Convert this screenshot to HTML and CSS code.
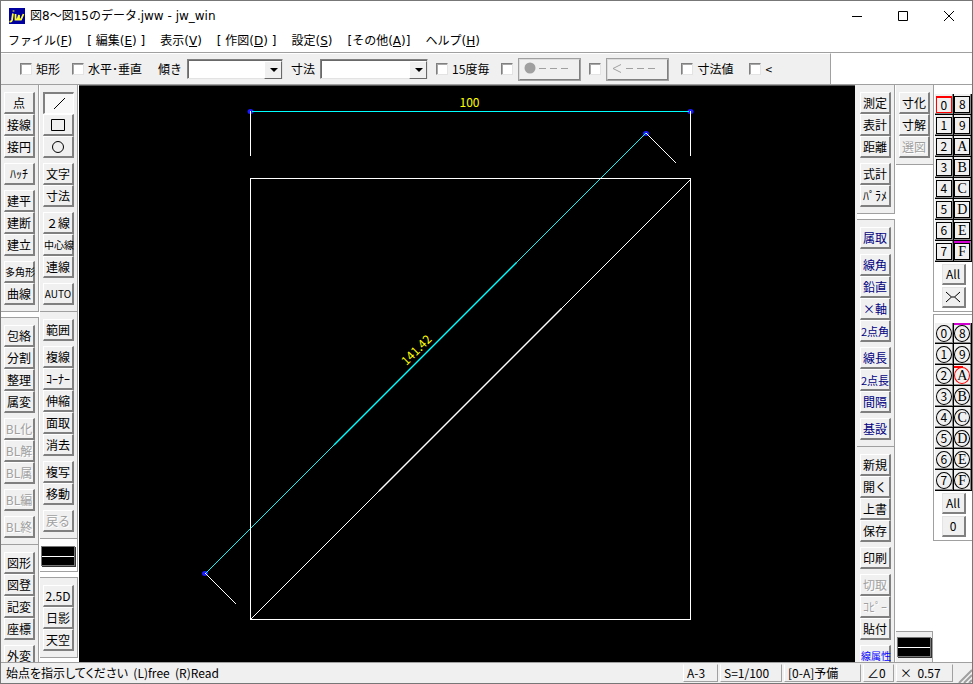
FILE: index.html
```html
<!DOCTYPE html>
<html lang="ja">
<head>
<meta charset="utf-8">
<title>図8～図15のデータ.jww - jw_win</title>
<link rel="stylesheet" href="styles.css">
</head>
<body>
<div class="window">
  <header class="titlebar">
    <svg class="logo" viewBox="0 0 16 16" aria-hidden="true">
      <rect width="16" height="16" fill="#0000a0"/>
      <path d="M4.500 2.500v1M4 5.500L3 12q-.5 2-2.500 1.500M6.500 6v5.500h2L10 7v4.500h2L14.500 6" fill="none" stroke="#ffff30" stroke-width="1.800"/>
    </svg>
    <h1 class="title">図8～図15のデータ.jww - jw_win</h1>
    <div class="caption-buttons">
      <button class="caption" aria-label="最小化"><svg viewBox="0 0 12 12"><path d="M1 6.500h10" /></svg></button>
      <button class="caption" aria-label="最大化"><svg viewBox="0 0 12 12"><path d="M1.500 1.500h9v9h-9z" /></svg></button>
      <button class="caption" aria-label="閉じる"><svg viewBox="0 0 12 12"><path d="M1 1l10 10M11 1L1 11" /></svg></button>
    </div>
  </header>

  <nav class="menubar">
    <a href="#">ファイル(<u>F</u>)</a>
    <a href="#">[ 編集(<u>E</u>) ]</a>
    <a href="#">表示(<u>V</u>)</a>
    <a href="#">[ 作図(<u>D</u>) ]</a>
    <a href="#">設定(<u>S</u>)</a>
    <a href="#">[その他(<u>A</u>)]</a>
    <a href="#">ヘルプ(<u>H</u>)</a>
  </nav>

  <div class="control-row">
    <form class="controls">
      <label class="check"><input type="checkbox">矩形</label>
      <label class="check wide"><input type="checkbox">水平･垂直</label>
      <label class="far" for="slope">傾き</label>
      <span class="combo tight"><select id="slope"><option></option></select></span>
      <label class="mid" for="size">寸法</label>
      <span class="combo combo-long tight"><select id="size"><option></option></select></span>
      <label class="check mid"><input type="checkbox">15度毎</label>
      <input class="wide" type="checkbox" aria-label="端点">
      <button type="button" class="style-button tight" disabled aria-label="端点形状">
        <svg viewBox="0 0 56 18"><circle cx="10" cy="8" r="5.500"/><path d="M19 8.500h7M30 8.500h7M41 8.500h7"/></svg>
      </button>
      <input class="mid" type="checkbox" aria-label="矢印">
      <button type="button" class="style-button tight" disabled aria-label="矢印形状">
        <svg viewBox="0 0 56 18"><path d="M13 4.500L5 8.500l8 4M18 8.500h7M29 8.500h7M40 8.500h7"/></svg>
      </button>
      <label class="check wide"><input type="checkbox">寸法値</label>
      <label class="check far"><input type="checkbox">&lt;</label>
    </form>
  </div>

  <main class="work">
    <div class="column">
      <section class="panel">
        <div class="group"><button>点</button><button>接線</button><button>接円</button></div>
        <div class="group"><button>ﾊｯﾁ</button></div>
        <div class="group"><button>建平</button><button>建断</button><button>建立</button></div>
        <div class="group"><button class="three">多角形</button><button>曲線</button></div>
      </section>
      <section class="panel detached">
        <div class="group"><button>包絡</button><button>分割</button><button>整理</button><button>属変</button></div>
        <div class="group"><button disabled>BL化</button><button disabled>BL解</button><button disabled>BL属</button></div>
        <div class="group"><button disabled>BL編</button></div>
        <div class="group"><button disabled>BL終</button></div>
      </section>
      <section class="panel last">
        <div class="group"><button>図形</button><button>図登</button><button>記変</button><button>座標</button></div>
        <div class="group"><button>外変</button></div>
      </section>
    </div>

    <div class="column">
      <section class="panel">
        <div class="group">
          <button class="pressed" aria-label="線"><svg viewBox="0 0 20 16"><path d="M5 13L16 2"/></svg></button>
          <button aria-label="矩形"><svg viewBox="0 0 20 16"><path d="M3.500 2.500h13v11h-13z"/></svg></button>
          <button aria-label="円弧"><svg viewBox="0 0 20 16"><circle cx="10" cy="8" r="5.500"/></svg></button>
        </div>
        <div class="group"><button>文字</button><button>寸法</button></div>
        <div class="group"><button>２線</button><button class="three">中心線</button><button>連線</button></div>
        <div class="group"><button class="three">AUTO</button></div>
      </section>
      <section class="panel">
        <div class="group"><button>範囲</button></div>
        <div class="group"><button>複線</button><button>ｺｰﾅｰ</button><button>伸縮</button><button>面取</button><button>消去</button></div>
        <div class="group"><button>複写</button><button>移動</button></div>
        <div class="group"><button disabled>戻る</button></div>
      </section>
      <section class="panel pen-panel"><button class="pen" aria-label="線属性"></button></section>
      <section class="panel detached">
        <div class="group"><button>2.5D</button><button>日影</button><button>天空</button></div>
      </section>
    </div>

    <div class="canvas">
      <svg class="drawing" viewBox="79 86 776 576" aria-label="作図">
        <g class="dots">
          <ellipse cx="250.500" cy="111.500" rx="3" ry="2.500"/><ellipse cx="690.500" cy="111.500" rx="3" ry="2.500"/>
          <ellipse cx="646" cy="133.500" rx="3" ry="2.500"/><ellipse cx="205" cy="573.500" rx="3" ry="2.500"/>
        </g>
        <path class="dim" d="M252 111.500H689M205.500 573.500L645.500 133.500"/>
        <path class="dim heavy" d="M334 445L516.500 262.500"/>
        <path class="line" d="M250.500 178.500H690.500V619.500H250.500zM250.500 619.500L690.500 179.500M250.500 111V156M690.500 111V156M646.500 133.500L676.500 163.500M205.500 573.500L236.500 604.500"/>
        <path class="line heavy" d="M379 491L561.500 308.500"/>
        <text x="469.500" y="107">100</text>
        <text transform="translate(419.500 353) rotate(-45)">141.42</text>
      </svg>
    </div>

    <div class="column tools-right">
      <section class="panel">
        <div class="group"><button>測定</button><button>表計</button><button>距離</button></div>
        <div class="group"><button>式計</button><button>ﾊﾟﾗﾒ</button></div>
      </section>
      <section class="panel detached navy">
        <div class="group"><button>属取</button></div>
        <div class="group"><button>線角</button><button>鉛直</button><button>×軸</button><button class="mixed">2点角</button></div>
        <div class="group"><button>線長</button><button class="mixed">2点長</button><button>間隔</button></div>
        <div class="group"><button>基設</button></div>
      </section>
      <section class="panel last">
        <div class="group"><button>新規</button><button>開く</button><button>上書</button><button>保存</button></div>
        <div class="group"><button>印刷</button></div>
        <div class="group"><button disabled>切取</button><button disabled>ｺﾋﾟｰ</button><button>貼付</button></div>
        <div class="group"><button class="three blue">線属性</button></div>
      </section>
    </div>

    <div class="column options">
      <section class="panel">
        <div class="group"><button>寸化</button><button>寸解</button><button disabled>選図</button></div>
      </section>
      <section class="panel pen-corner"><button class="pen" aria-label="線色"></button></section>
    </div>

    <div class="layers">
      <section class="layer-panel">
        <div class="layer-grid square">
          <button class="current"><span>0</span></button><button><span>8</span></button>
          <button><span>1</span></button><button><span>9</span></button>
          <button><span>2</span></button><button class="letter"><span>A</span></button>
          <button><span>3</span></button><button class="letter"><span>B</span></button>
          <button><span>4</span></button><button class="letter"><span>C</span></button>
          <button><span>5</span></button><button class="letter"><span>D</span></button>
          <button><span>6</span></button><button class="letter"><span>E</span></button>
          <button><span>7</span></button><button class="letter used"><span>F</span></button>
        </div>
        <button class="small">All</button>
        <button class="small" aria-label="×"><svg viewBox="0 0 16 14"><path d="M1 2L6.500 7L1 12M15 2L9.500 7L15 12M6.500 7h3"/></svg></button>
      </section>
      <section class="layer-panel second">
        <div class="layer-grid round">
          <button><span>0</span></button><button class="used"><span>8</span></button>
          <button><span>1</span></button><button><span>9</span></button>
          <button><span>2</span></button><button class="letter current"><span>A</span></button>
          <button><span>3</span></button><button class="letter"><span>B</span></button>
          <button><span>4</span></button><button class="letter"><span>C</span></button>
          <button><span>5</span></button><button class="letter"><span>D</span></button>
          <button><span>6</span></button><button class="letter"><span>E</span></button>
          <button><span>7</span></button><button class="letter"><span>F</span></button>
        </div>
        <button class="small">All</button>
        <button class="small">0</button>
      </section>
    </div>
  </main>

  <footer class="status">
    <span class="message">始点を指示してください&nbsp; (L)free&nbsp; (R)Read</span>
    <button class="cell paper">A-3</button>
    <button class="cell scale">S=1/100</button>
    <button class="cell layer-name">[0-A]予備</button>
    <button class="cell angle">∠0</button>
    <button class="cell zoom">×&nbsp; 0.57</button>
    <svg class="grip" viewBox="0 0 14 14" aria-hidden="true"><path d="M1 14L14 1M6 14l8-8M11 14l3-3"/></svg>
  </footer>
</div>
</body>
</html>
```

FILE: styles.css
```css
* {
  box-sizing: border-box;
}

:root {
  --face: #f0f0f0;
  --edge: #a0a0a0;
  --dark: #808080;
}

body {
  margin: 0;
  font: 12px/16px "Noto Sans CJK JP", sans-serif;
  color: #000;
  background: #fff;
}

button,
select,
input {
  margin: 0;
  padding: 0;
  font: inherit;
  color: inherit;
  border-radius: 0;
}

.window {
  display: flex;
  flex-direction: column;
  height: 100vh;
  overflow: hidden;
  border: 1px solid #777;
  background: #fff;
}

/* Title and menu */
.titlebar {
  display: flex;
  align-items: center;
  flex: none;
  height: 29px;
  padding-left: 8px;
}

.titlebar,
.menubar {
  font-family: "DejaVu Sans", "Noto Sans CJK JP", sans-serif;
}

.logo {
  width: 16px;
  height: 16px;
}

.title {
  flex: 1;
  margin: 0 0 0 5px;
  font-size: 12px;
  font-weight: 400;
}

.caption-buttons {
  display: flex;
}

.caption {
  width: 46px;
  height: 28px;
  border: 0;
  background: none;
}

.caption svg {
  display: block;
  width: 12px;
  height: 12px;
  margin: auto;
}

.caption path {
  fill: none;
  stroke: #000;
}

.menubar {
  display: flex;
  align-items: center;
  flex: none;
  gap: 15px;
  height: 22px;
  padding-left: 7px;
}

.menubar a {
  color: #000;
  text-decoration: none;
  white-space: pre;
}

/* Control bar */
.control-row {
  flex: none;
  height: 33px;
  border-top: 1px solid var(--edge);
  border-bottom: 1px solid var(--edge);
}

.controls {
  display: flex;
  align-items: center;
  width: 830px;
  height: 31px;
  padding-left: 19px;
  border-top: 1px solid #fff;
  border-right: 1px solid var(--edge);
  background: var(--face);
  white-space: nowrap;
}

.check {
  display: flex;
  align-items: center;
  gap: 4px;
}

.tight { margin-left: 5px; }
.mid { margin-left: 8px; }
.wide { margin-left: 12px; }
.far { margin-left: 16px; }

input[type="checkbox"] {
  appearance: none;
  flex: none;
  width: 12px;
  height: 12px;
  border: 1px solid;
  border-color: var(--dark) #e3e3e3 #e3e3e3 var(--dark);
  background: #fff;
  box-shadow: inset 1px 1px #a8a8a8;
}

.combo {
  position: relative;
  width: 96px;
  height: 20px;
}

.combo-long {
  width: 108px;
}

.combo select {
  appearance: none;
  display: block;
  width: 100%;
  height: 100%;
  border: 1px solid;
  border-color: var(--dark) #e3e3e3 #e3e3e3 var(--dark);
  background: #fff;
  box-shadow: inset 1px 1px #696969;
}

.combo::before {
  content: "";
  position: absolute;
  top: 2px;
  right: 1px;
  width: 16px;
  height: 16px;
  border: 1px solid;
  border-color: #fff #696969 #696969 #fff;
  background: var(--face);
  pointer-events: none;
}

.combo::after {
  content: "";
  position: absolute;
  top: 9px;
  right: 5px;
  border: 4px solid transparent;
  border-top-color: #000;
  border-bottom: 0;
  pointer-events: none;
}

.style-button {
  width: 63px;
  height: 23px;
  border: 2px solid;
  border-color: #dcdcdc var(--dark) var(--dark) #dcdcdc;
  outline: 1px solid var(--edge);
  outline-offset: -1px;
  background: var(--face);
}

.style-button svg {
  display: block;
  width: 56px;
  height: 18px;
}

.style-button circle {
  fill: var(--edge);
}

.style-button path {
  fill: none;
  stroke: var(--edge);
}

/* Work area */
.work {
  display: flex;
  flex: 1;
  min-height: 0;
  overflow: hidden;
}

.column {
  display: flex;
  flex-direction: column;
  flex: none;
  width: 39px;
  overflow: hidden;
}

.panel {
  display: flex;
  flex-direction: column;
  flex: none;
  gap: 5px;
  padding: 7px 3px 6px;
  margin-right: 1px;
  border-right: 1px solid var(--edge);
  border-bottom: 1px solid var(--edge);
  background: var(--face);
}

.detached {
  margin-top: 6px;
  box-shadow: 0 -1px var(--edge);
}

.last {
  flex: 1 0 auto;
}

.group {
  display: flex;
  flex-direction: column;
}

.group button {
  width: 31px;
  height: 22px;
  border: solid;
  border-width: 1px 2px 2px 1px;
  border-color: #fff var(--dark) var(--dark) #fff;
  background: var(--face);
  line-height: 18px;
  white-space: nowrap;
}

.group button:disabled {
  color: var(--edge);
  text-shadow: 1px 1px #fff;
}

.group .three {
  font-size: 10px;
}

.group .mixed {
  font-size: 11px;
}

.group .pressed {
  border-width: 2px 1px 1px 2px;
  border-color: var(--dark) #fff #fff var(--dark);
  background: #f8f8f8;
}

.group svg {
  display: block;
  width: 20px;
  height: 16px;
  margin: auto;
}

.group svg * {
  fill: none;
  stroke: #000;
}

.navy button {
  color: #000080;
}

.group .blue {
  color: #00f;
}

.pen {
  display: block;
  width: 34px;
  height: 20px;
  border: 1px solid #777;
  background: linear-gradient(#fff, #fff) center / 100% 1px no-repeat #000;
  box-shadow: 1px 1px #333;
}

.pen-panel {
  padding: 7px 1px 5px;
  background: #fff;
}

.canvas {
  flex: 1;
  min-width: 0;
  border-top: 1px solid #555;
  background: #000;
}

.drawing {
  display: block;
  width: 100%;
  height: 100%;
}

.drawing path {
  fill: none;
  stroke-width: 1;
  shape-rendering: crispEdges;
}

.drawing .heavy {
  stroke-width: 1.4;
  shape-rendering: auto;
}

.line { stroke: #fff; }
.dim { stroke: #0ff; }
.dots { fill: #1a1aff; }

.drawing text {
  fill: #ff0;
  font-size: 12px;
  text-anchor: middle;
}

.tools-right {
  width: 41px;
  padding-left: 2px;
  background: linear-gradient(90deg, var(--face) 2px, #fff 2px);
}

.options {
  justify-content: space-between;
  width: 37px;
}

.options .panel {
  margin-right: 0;
  border-right: 0;
}

.options .pen-corner {
  padding: 5px 1px;
  border-top: 1px solid var(--edge);
  border-right: 1px solid var(--edge);
  border-bottom: 0;
}

/* Layer bars */
.layers {
  flex: none;
  width: 39px;
}

.layer-panel {
  display: flex;
  flex-direction: column;
  align-items: center;
  gap: 2px;
  padding: 9px 0 3px 1px;
  border-left: 1px solid var(--edge);
  border-bottom: 1px solid var(--edge);
}

.second {
  margin-top: 2px;
  border-top: 1px solid var(--edge);
  padding-top: 8px;
}

.layer-grid {
  display: grid;
  grid-template-columns: 1fr 1fr;
  width: 100%;
}

.layer-grid button {
  display: flex;
  align-items: center;
  justify-content: center;
  height: 21px;
  border: solid #000;
  border-width: 0 1px 1px 0;
  background: var(--face);
  box-shadow: inset -1px -1px #888;
  font-size: 12px;
  line-height: 14px;
}

.layer-grid span {
  width: 16px;
  height: 17px;
  border: 1px solid #000;
}

.layer-grid .letter {
  font-family: "Liberation Serif", serif;
  font-size: 14px;
  line-height: 15px;
}

.round span {
  border-radius: 50%;
}

.layer-grid .current span {
  border-color: #f00;
}

.square .current span {
  border-width: 2px 1px 1px;
}

.layer-grid .used {
  background: linear-gradient(#d000d0, #d000d0) top / 100% 2px no-repeat var(--face);
}

.round .current {
  background: linear-gradient(#f00, #f00) 0 1px / 9px 2px no-repeat var(--face);
}

.small {
  width: 24px;
  height: 21px;
  border: solid;
  border-width: 1px 2px 2px 1px;
  border-color: #e3e3e3 var(--dark) var(--dark) #e3e3e3;
  background: var(--face);
}

.small svg {
  display: block;
  width: 16px;
  height: 14px;
  margin: auto;
}

.small path {
  fill: none;
  stroke: #000;
}

/* Status bar */
.status {
  display: flex;
  align-items: center;
  flex: none;
  gap: 2px;
  height: 21px;
  border-top: 1px solid var(--edge);
  background: var(--face);
  white-space: nowrap;
}

.message {
  flex: 1;
  padding-left: 5px;
  font-feature-settings: "palt";
}

.cell {
  height: 18px;
  padding-left: 3px;
  border: 1px solid;
  border-color: var(--face) var(--edge) var(--edge) #fff;
  background: var(--face);
  line-height: 14px;
  text-align: left;
}

.paper { width: 35px; }
.scale { width: 62px; }
.layer-name { width: 77px; }
.angle { width: 31px; }
.zoom { width: 57px; }

.grip {
  width: 14px;
  height: 14px;
  margin-left: 3px;
  align-self: flex-end;
}

.grip path {
  fill: none;
  stroke: var(--edge);
  stroke-width: 2;
}
```
